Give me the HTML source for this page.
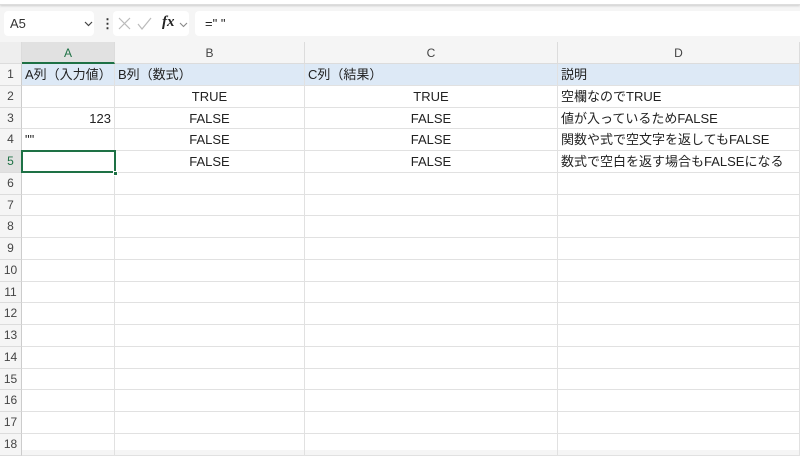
<!DOCTYPE html>
<html><head><meta charset="utf-8"><style>
*{margin:0;padding:0;box-sizing:border-box}
body{width:800px;height:450px;overflow:hidden;background:#f5f5f5;font-family:"Liberation Sans","Noto Sans CJK JP",sans-serif;position:relative}
.top{position:absolute;left:0;top:0;width:800px;height:5px;background:#fff;border-bottom:1px solid #ddd;box-shadow:0 1px 2px #ccc}
.box{position:absolute;background:#fff;border-radius:4px;top:11px;height:25px}
.grid{position:absolute;left:0;top:42px;width:800px;height:408px;background:#fff}
.ch{position:absolute;top:42px;height:22px;background:#f5f5f5;border-right:1px solid #dcdcdc;border-bottom:1px solid #dcdcdc;font-size:12px;color:#444;text-align:center;line-height:22px}
.rh{position:absolute;left:0;width:22px;background:#f5f5f5;border-bottom:1px solid #dcdcdc;border-right:1px solid #ccc;font-size:12px;color:#444;text-align:center}
.c{position:absolute;border-right:1px solid #e1e1e1;border-bottom:1px solid #e1e1e1;font-size:13px;color:#222;white-space:nowrap;overflow:visible;padding:0 3px}
</style></head><body>
<div class="top"></div>
<div class="box" style="left:4px;width:90px"><span style="position:absolute;left:6px;top:5px;font-size:13px;color:#333">A5</span>
<svg style="position:absolute;left:80px;top:10px" width="9" height="6"><path d="M1 1 L4.5 4.5 L8 1" fill="none" stroke="#444" stroke-width="1.2"/></svg></div>
<div style="position:absolute;left:101px;top:16px;font-size:13px;color:#333;font-weight:bold">⋮</div>
<div class="box" style="left:113px;width:76px">
<svg style="position:absolute;left:5px;top:6px" width="40" height="14"><path d="M1 1 L12 12 M12 1 L1 12" stroke="#bbb" stroke-width="1.2"/><path d="M20 7 L24 12 L33 1" fill="none" stroke="#bbb" stroke-width="1.2"/></svg>
<span style="position:absolute;left:49px;top:3px;font-size:15px;font-style:italic;font-weight:bold;font-family:'Liberation Serif',serif;color:#222">fx</span>
<svg style="position:absolute;left:66px;top:11px" width="9" height="6"><path d="M1 1 L4.5 4.5 L8 1" fill="none" stroke="#888" stroke-width="1.1"/></svg></div>
<div class="box" style="left:195px;width:610px"><span style="position:absolute;left:10px;top:5px;font-size:13px;color:#222">=" "</span></div>
<div class="grid"></div>
<div class="ch" style="left:0;width:22px;background:#eee"></div>
<div class="ch" style="left:22px;width:93px;background:#e1e1e1;border-bottom:2px solid #1e7145;color:#1e7145">A</div>
<div class="ch" style="left:115px;width:190px">B</div>
<div class="ch" style="left:305px;width:253px">C</div>
<div class="ch" style="left:558px;width:242px">D</div>
<div id="rows"></div>
<script>
var h=21.75,t=64,cols=[[22,93],[115,190],[305,253],[558,242]];
var data=[["A列（入力値）","B列（数式）","C列（結果）","説明"],["","TRUE","TRUE","空欄なのでTRUE"],["123","FALSE","FALSE","値が入っているためFALSE"],['""',"FALSE","FALSE","関数や式で空文字を返してもFALSE"],["","FALSE","FALSE","数式で空白を返す場合もFALSEになる"]];
var s="";
for(var r=0;r<18;r++){var y=t+r*h;
s+='<div class="rh" style="top:'+y+'px;height:'+h+'px;line-height:'+h+'px;'+(r==4?'background:#e1e1e1;color:#1e7145':'')+'">'+(r+1)+'</div>';
for(var c=0;c<4;c++){var txt=data[r]?data[r][c]:"";var al=r==0||c==3?"left":(c==0?(r==2?"right":"left"):"center");
var bg=r==0?"background:#dde9f6;":"";
s+='<div class="c" style="'+bg+'left:'+cols[c][0]+'px;top:'+y+'px;width:'+cols[c][1]+'px;height:'+h+'px;line-height:'+h+'px;text-align:'+al+'">'+txt+'</div>';}}
s+='<div style="position:absolute;left:21px;top:'+(t+4*h-1)+'px;width:95px;height:'+(h+1)+'px;border:2px solid #1e7145"></div><div style="position:absolute;left:113px;top:'+(t+5*h-2)+'px;width:5px;height:5px;background:#1e7145;border:1px solid #fff"></div>';
document.getElementById("rows").innerHTML=s;
</script>
</body></html>
